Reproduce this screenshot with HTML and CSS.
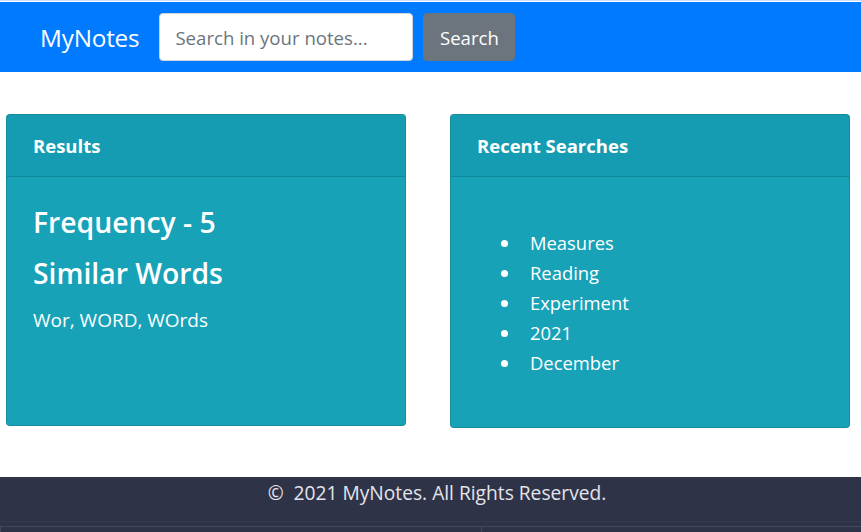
FILE: index.html
```html
<!DOCTYPE html>
<html lang="en">
<head>
<meta charset="utf-8">
<title>MyNotes</title>
<link rel="stylesheet" href="styles.css">
</head>
<body>
<nav class="navbar">
  <a class="brand" href="#">MyNotes</a>
  <form class="search-form">
    <input class="search-input" type="text" placeholder="Search in your notes...">
    <button class="search-btn" type="button">Search</button>
  </form>
</nav>

<main class="cards">
  <section class="card card-left">
    <header class="card-header">Results</header>
    <div class="card-body">
      <h3 class="stat">Frequency - 5</h3>
      <h3 class="stat">Similar Words</h3>
      <p class="words">Wor, WORD, WOrds</p>
    </div>
  </section>
  <section class="card card-right">
    <header class="card-header">Recent Searches</header>
    <div class="card-body">
      <ul class="recent">
        <li>Measures</li>
        <li>Reading</li>
        <li>Experiment</li>
        <li>2021</li>
        <li>December</li>
      </ul>
    </div>
  </section>
</main>

<footer class="footer">
  <p class="copy">©&nbsp; 2021 MyNotes. All Rights Reserved.</p>
  <div class="footer-bottom">
    <div class="fcol"></div>
    <div class="fcol"></div>
  </div>
</footer>
</body>
</html>
```

FILE: styles.css
```css
* { box-sizing: border-box; }
html, body {
  margin: 0;
  padding: 0;
  background: #fff;
  font-family: "Open Sans", "Noto Sans", sans-serif;
  color: #fff;
}
body {
  padding-top: 1px;
  border-top: 1px solid #cfe3ff;
}
.navbar {
  height: 70px;
  background: #007bff;
  display: flex;
  align-items: center;
  padding: 0 0 0 40px;
}
.brand {
  color: #fff;
  text-decoration: none;
  font-size: 24.3px;
  margin-right: 20px;
  letter-spacing: -0.2px;
}
.search-form {
  display: flex;
  align-items: center;
  gap: 10px;
}
.search-input {
  width: 254px;
  height: 48px;
  border: 1px solid #ced4da;
  border-radius: 4px;
  padding: 0 15px;
  font-family: inherit;
  font-size: 18.6px;
  color: #495057;
  outline: none;
}
.search-input::placeholder { color: #6c757d; }
.search-btn {
  height: 48px;
  width: 92px;
  background: #6c757d;
  color: #fff;
  border: 1px solid #6c757d;
  border-radius: 4px;
  font-family: inherit;
  font-size: 18.6px;
  padding: 0;
}
.cards {
  display: flex;
  gap: 44px;
  padding: 42px 0 0 6px;
  height: 405px;
  align-items: flex-start;
}
.card {
  width: 400px;
  background: #17a2b8;
  border: 1px solid rgba(0,0,0,.125);
  border-radius: 4px;
  overflow: hidden;
}
.card-left { height: 312px; }
.card-right { height: 314px; }
.card-header {
  height: 62px;
  background: rgba(0,0,0,.03);
  border-bottom: 1px solid rgba(0,0,0,.125);
  padding: 0 26px;
  display: flex;
  align-items: center;
  font-weight: 700;
  font-size: 18.5px;
}
.card-body { padding: 28px 26px 25px; }
.stat {
  margin: 0 0 17px;
  font-size: 28.3px;
  line-height: 34px;
  font-weight: 600;
}
.words {
  margin: 0;
  font-size: 19px;
  line-height: 27px;
}
.recent {
  margin: 23px 0 0;
  padding-left: 44px;
  font-size: 18.4px;
  line-height: 30px;
}
.recent li { padding-left: 9px; }
.footer {
  background: #2e3348;
  height: 55px;
  display: flex;
  flex-direction: column;
}
.copy {
  margin: 0;
  text-align: center;
  color: #e4e4ea;
  font-size: 19.2px;
  line-height: 32px;
  height: 45px;
  padding-left: 13px;
  border-bottom: 1px solid #353a50;
}
.footer-bottom {
  flex: 1;
  display: flex;
  margin-top: 4px;
  border-top: 1px solid #444861;
  border-left: 1px solid #444861;
}
.fcol { width: 480px; }
.fcol + .fcol { border-left: 1px solid #444861; flex: 1; }
```
